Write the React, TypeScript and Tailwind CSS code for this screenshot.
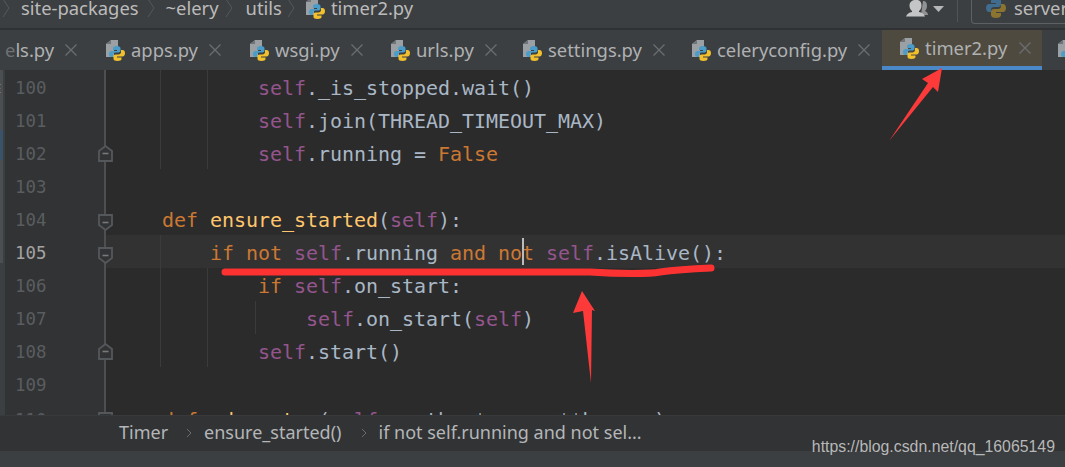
import React from "react";

const K = "text-[#cc7832]";
const S = "text-[#94558d]";
const D = "text-[#a9b7c6]";
const F = "text-[#ffc66d]";

type Seg = [string, string];
type Line = { n: number; indent: number; segs: Seg[]; guides: number; fold?: "up" | "down" };

const lines: Line[] = [
  { n: 100, indent: 12, guides: 2, segs: [["self", S], ["._is_stopped.wait()", D]] },
  { n: 101, indent: 12, guides: 2, segs: [["self", S], [".join(THREAD_TIMEOUT_MAX)", D]] },
  { n: 102, indent: 12, guides: 2, fold: "up", segs: [["self", S], [".running = ", D], ["False", K]] },
  { n: 103, indent: 0, guides: 0, segs: [] },
  { n: 104, indent: 4, guides: 0, fold: "down", segs: [["def ", K], ["ensure_started", F], ["(", D], ["self", S], ["):", D]] },
  { n: 105, indent: 8, guides: 1, fold: "down", segs: [["if not ", K], ["self", S], [".running ", D], ["and not ", K], ["self", S], [".isAlive():", D]] },
  { n: 106, indent: 12, guides: 2, segs: [["if ", K], ["self", S], [".on_start:", D]] },
  { n: 107, indent: 16, guides: 3, segs: [["self", S], [".on_start(", D], ["self", S], [")", D]] },
  { n: 108, indent: 12, guides: 2, fold: "up", segs: [["self", S], [".start()", D]] },
  { n: 109, indent: 0, guides: 0, segs: [] },
  { n: 110, indent: 4, guides: 0, fold: "down", segs: [["def ", K], ["_do_enter", F], ["(", D], ["self", S], [", meth, *args, **kwargs):", D]] },
];

function PyIcon() {
  return (
    <svg width="20" height="22" viewBox="0 0 20 22" className="shrink-0">
      <path d="M1 5 L6 1 H13 V8 H9 V18 H1 Z" fill="#9aa0a4" />
      <path d="M6 1 V5 H1 Z" fill="#6e7477" />
      <path d="M12 7 c-3 0-4 1-4 2.500 V11 H12 v1 H6.500 C5 12 4 13.200 4 15 c0 1.800 1 3 2.500 3 H8 v-2 c0-1.500 1-2.500 2.500-2.500 h3 c1.200 0 2-.8 2-2 V9.500 C15.500 8 14.500 7 12 7 Z" fill="#4a9cc9" />
      <path d="M20 14 c0-1.800-1-3-2.400-3 H16 v2 c0 1.500-1 2.500-2.500 2.500 h-3 c-1.200 0-2 .8-2 2 V20 c0 1.300 1.500 2 4 2 s4-.8 4-2 v-1.500 H12 v-1 h5.500 C19 17.500 20 16 20 14 Z" fill="#f2c02d" />
    </svg>
  );
}

function Chevron() {
  return (
    <svg width="10" height="18" viewBox="0 0 10 18" className="shrink-0">
      <path d="M2 0 L8 9 L2 18" fill="none" stroke="#55595c" strokeWidth="1" />
    </svg>
  );
}

function CloseX() {
  return (
    <svg width="12" height="12" viewBox="0 0 12 12" className="ml-[11px] shrink-0">
      <path d="M0.500 0.500 L11.500 11.500 M11.500 0.500 L0.500 11.500" stroke="#6a6e70" strokeWidth="1.300" />
    </svg>
  );
}

function Tab({ name, cls }: { name: string; cls: string }) {
  return (
    <div className={`flex items-center shrink-0 ${cls}`}>
      <PyIcon />
      <span className="ml-[6px] text-[18.400px] text-[#afb1b3]">{name}</span>
      <CloseX />
    </div>
  );
}

function Fold({ kind }: { kind: "up" | "down" }) {
  const d = kind === "up" ? "M1 16 V6 L7.500 1 L14 6 V16 Z" : "M1 1 H14 V11 L7.500 16 L1 11 Z";
  return (
    <svg
      width="15"
      height="17"
      viewBox="0 0 15 17"
      className={`absolute left-[-7px] ${kind === "up" ? "top-[9px]" : "top-[12px]"}`}
    >
      <path d={d} fill="#313335" stroke="#55585a" strokeWidth="1.800" />
      <path d="M4.500 8.500 H10.500" stroke="#77797b" strokeWidth="1.600" />
    </svg>
  );
}

export default function App() {
  return (
    <div className="relative w-[1065px] h-[467px] overflow-hidden flex flex-col bg-[#3c3f41] font-['Noto_Sans','Open_Sans',sans-serif]">
      {/* breadcrumb bar: scrolled up, so its row is shorter than its content */}
      <div className="h-[28px] shrink-0 overflow-hidden">
        <div className="h-[16px] flex items-center text-[#bbbbbb] text-[18.400px] whitespace-nowrap">
          <div className="ml-[1px]"><Chevron /></div>
          <span className="ml-[10px]">site-packages</span>
          <div className="ml-[7px]"><Chevron /></div>
          <span className="ml-[10px]">~elery</span>
          <div className="ml-[5px]"><Chevron /></div>
          <span className="ml-[12px]">utils</span>
          <div className="ml-[4px]"><Chevron /></div>
          <div className="ml-[9px]"><PyIcon /></div>
          <span className="ml-[6px]">timer2.py</span>
          <div className="ml-auto flex items-start self-start shrink-0">
            <svg width="38" height="18" viewBox="0 0 38 18" className="shrink-0">
              <path d="M17 1 c3 0 4 2 4 5 c0 2-1 4-2 5 c2 1 3 2 3 4 H15 Z" fill="#8f9192" />
              <path d="M10 0 c4 0 5.500 2 5.500 5.500 c0 2.500-1 4.500-2.500 5.500 v1 c3 .8 5 1.500 6 4.500 H0 c1-3 3-3.700 6-4.500 v-1 C4.500 10 3.500 8 3.500 5.500 C3.500 2 6 0 10 0 Z" fill="#c3c5c6" />
              <path d="M27 6 H38 L32.500 12 Z" fill="#b5b7b8" />
            </svg>
            <div className="w-px h-[22px] bg-[#515456] ml-[13px]" />
            <div className="ml-[13px] w-[94px] h-[24px] border-l border-b border-[#5e6163] rounded-bl-[4px] flex items-center pl-[14px] pb-[8px] overflow-hidden">
              <svg width="20" height="20" viewBox="0 0 20 20" className="shrink-0">
                <path d="M10 0 c-4 0-5 1-5 3 V5 H10 v1 H3 C1 6 0 8 0 10 c0 2 1 4 3 4 H5 v-2 c0-2 1-3 3-3 h4 c2 0 3-1 3-3 V3 C15 1 13 0 10 0 Z" fill="#3f6c8f" />
                <path d="M20 10 c0-2-1-4-3-4 H15 v2 c0 2-1 3-3 3 H8 c-2 0-3 1-3 3 v3 c0 2 2 3 5 3 s5-1 5-3 V15 H10 v-1 h7 C19 14 20 12 20 10 Z" fill="#8a7430" />
              </svg>
              <span className="ml-[8px]">server</span>
            </div>
          </div>
        </div>
      </div>
      <div className="h-[2px] shrink-0 bg-[#2f3133]" />

      {/* tabs */}
      <div className="h-[40px] shrink-0 flex overflow-hidden pl-[5px]">
        <div className="w-[100px] shrink-0 flex items-center overflow-hidden">
          <span className="text-[18.400px] text-[#afb1b3] whitespace-nowrap">
            <span className="text-[#6f7274]">e</span>ls.py
          </span>
          <CloseX />
        </div>
        <Tab name="apps.py" cls="w-[144px]" />
        <Tab name="wsgi.py" cls="w-[141px]" />
        <Tab name="urls.py" cls="w-[132px]" />
        <Tab name="settings.py" cls="w-[169px]" />
        <Tab name="celeryconfig.py" cls="w-[191px]" />
        <div className="w-[160px] shrink-0 h-full border-b-[4px] border-[#4a88c7] bg-[#4e4a3f] flex items-center pl-[17px]">
          <PyIcon />
          <span className="ml-[6px] text-[18.400px] text-[#afb1b3]">timer2.py</span>
          <svg width="12" height="12" viewBox="0 0 12 12" className="ml-[12px] shrink-0">
            <path d="M0.500 0.500 L11.500 11.500 M11.500 0.500 L0.500 11.500" stroke="#6a6e70" strokeWidth="1.300" />
          </svg>
        </div>
        <div className="ml-[15px] shrink-0 flex items-center"><PyIcon /></div>
      </div>

      {/* editor */}
      <div className="h-[345px] shrink-0 overflow-hidden bg-[#2b2b2b] flex">
        <div className="w-[5px] shrink-0 bg-[#3c3f41]">
          <div className="w-[3px] h-[60px] bg-[#4c4f51] overflow-hidden text-[13px] leading-[36px] text-[#8a8c8e]">
            <span className="block ml-[-6px]">E</span>
          </div>
          <div className="w-[3px] h-[30px] bg-[#39536b]" />
          <div className="w-[3px] h-[103px] bg-[#4c4f51]" />
        </div>
        <div className="flex-1 min-w-0 font-['DejaVu_Sans_Mono',monospace] text-[20px]">
          {lines.map((l) => (
            <div key={l.n} className="h-[33px] flex leading-[33px]">
              <div className={`w-[100px] shrink-0 bg-[#313335] pl-[10px] text-[17.400px] ${l.n === 110 ? "pt-[4px]" : "pt-[2px]"} ${l.n === 105 ? "text-[#a4a3a3]" : "text-[#5a5d5f]"}`}>
                {l.n}
              </div>
              <div className={`relative flex-1 whitespace-pre tracking-[-0.040px] ${l.n === 105 ? "bg-[#323232]" : ""}`}>
                <div className="absolute left-[-1px] top-0 w-[2px] h-[33px] bg-[#4d4f51]" />
                {l.fold && <Fold kind={l.fold} />}
                {Array.from({ length: l.guides }).map((_, i) => (
                  <div
                    key={i}
                    className={`absolute top-0 w-px h-[33px] bg-[#3b3b3b] ${i === 0 ? "left-[55px]" : i === 1 ? "left-[102px]" : "left-[150px]"}`}
                  />
                ))}
                <div className={`pl-[9px] ${l.n === 110 ? "pt-[4px]" : "pt-[2px]"}`}>
                  {" ".repeat(l.indent)}
                  {l.segs.map(([t, c], i) => (
                    <span key={i} className={c}>{t}</span>
                  ))}
                </div>
                {l.n === 105 && <div className="absolute left-[417px] top-[3px] w-[2px] h-[27px] bg-[#bbbbbb]" />}
              </div>
            </div>
          ))}
        </div>
      </div>

      {/* bottom breadcrumb */}
      <div className="h-[36px] shrink-0 bg-[#313335] border-t border-[#37393b] flex items-center pl-[119px] pb-[2px] text-[18px] text-[#b4b6b8] whitespace-nowrap">
        <span>Timer</span>
        <svg width="6" height="10" viewBox="0 0 6 10" className="ml-[18px] shrink-0"><path d="M1 1 L5 5 L1 9" fill="none" stroke="#6a6d6f" strokeWidth="1" /></svg>
        <span className="ml-[12px]">ensure_started()</span>
        <svg width="6" height="10" viewBox="0 0 6 10" className="ml-[19px] shrink-0"><path d="M1 1 L5 5 L1 9" fill="none" stroke="#6a6d6f" strokeWidth="1" /></svg>
        <span className="ml-[12px]">if not self.running and not sel...</span>
      </div>
      <div className="flex-1 bg-[#3c3f41]" />

      {/* watermark */}
      <div className="absolute right-[10px] top-[438px] text-[15.850px] text-[#b8b8b8] font-['Liberation_Sans',sans-serif] leading-[18px]">
        https://blog.csdn.net/qq_16065149
      </div>

      {/* annotations */}
      <svg width="1065" height="467" viewBox="0 0 1065 467" className="absolute left-0 top-0 pointer-events-none">
        <path d="M942 68 L922 79 L928 83 L889 141 L933 87 L938 92 Z" fill="#fc3a3a" />
        <path d="M582 291 L573 313 L583 311 L591 383 L592 310 L595 311 Z" fill="#fc3a3a" />
        <path d="M225 272 L590 272 C620 274 650 274 660 272 C675 270 690 269 711 268" fill="none" stroke="#fc3232" strokeWidth="7" strokeLinecap="round" />
      </svg>
    </div>
  );
}
